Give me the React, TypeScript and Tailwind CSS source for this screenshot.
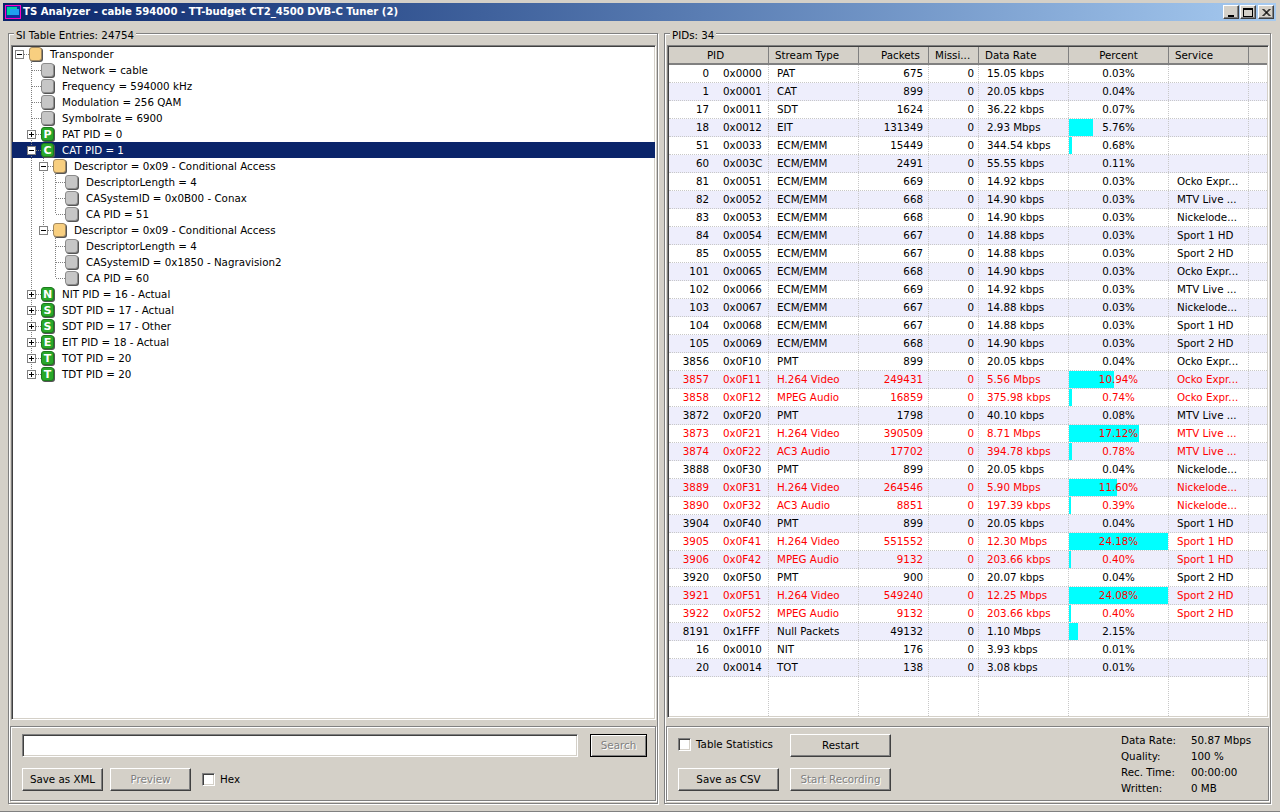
// TS Analyzer main window
import type { ReactNode } from "react";

type Kind = "" | "v" | "t" | "l" | "p" | "m" | "P" | "M" | "R";

type TreeRow = {
  text: string;
  guides: Kind[];
  icon: "yellow" | "gray" | "green";
  letter?: string;
  selected?: boolean;
};

const TREE: TreeRow[] = [
  { text: "Transponder", guides: ["R"], icon: "yellow" },
  { text: "Network = cable", guides: ["", "t"], icon: "gray" },
  { text: "Frequency = 594000 kHz", guides: ["", "t"], icon: "gray" },
  { text: "Modulation = 256 QAM", guides: ["", "t"], icon: "gray" },
  { text: "Symbolrate = 6900", guides: ["", "t"], icon: "gray" },
  { text: "PAT PID = 0", guides: ["", "p"], icon: "green", letter: "P" },
  { text: "CAT PID = 1", guides: ["", "m"], icon: "green", letter: "C", selected: true },
  { text: "Descriptor = 0x09 - Conditional Access", guides: ["", "v", "m"], icon: "yellow" },
  { text: "DescriptorLength = 4", guides: ["", "v", "v", "t"], icon: "gray" },
  { text: "CASystemID = 0x0B00 - Conax", guides: ["", "v", "v", "t"], icon: "gray" },
  { text: "CA PID = 51", guides: ["", "v", "v", "l"], icon: "gray" },
  { text: "Descriptor = 0x09 - Conditional Access", guides: ["", "v", "M"], icon: "yellow" },
  { text: "DescriptorLength = 4", guides: ["", "v", "", "t"], icon: "gray" },
  { text: "CASystemID = 0x1850 - Nagravision2", guides: ["", "v", "", "t"], icon: "gray" },
  { text: "CA PID = 60", guides: ["", "v", "", "l"], icon: "gray" },
  { text: "NIT PID = 16 - Actual", guides: ["", "p"], icon: "green", letter: "N" },
  { text: "SDT PID = 17 - Actual", guides: ["", "p"], icon: "green", letter: "S" },
  { text: "SDT PID = 17 - Other", guides: ["", "p"], icon: "green", letter: "S" },
  { text: "EIT PID = 18 - Actual", guides: ["", "p"], icon: "green", letter: "E" },
  { text: "TOT PID = 20", guides: ["", "p"], icon: "green", letter: "T" },
  { text: "TDT PID = 20", guides: ["", "P"], icon: "green", letter: "T" },
];

// pid, hex, type, packets, rate, percent, service, red
type Pid = [number, string, string, number, string, number, string, boolean?];

const PIDS: Pid[] = [
  [0, "0x0000", "PAT", 675, "15.05 kbps", 0.03, ""],
  [1, "0x0001", "CAT", 899, "20.05 kbps", 0.04, ""],
  [17, "0x0011", "SDT", 1624, "36.22 kbps", 0.07, ""],
  [18, "0x0012", "EIT", 131349, "2.93 Mbps", 5.76, ""],
  [51, "0x0033", "ECM/EMM", 15449, "344.54 kbps", 0.68, ""],
  [60, "0x003C", "ECM/EMM", 2491, "55.55 kbps", 0.11, ""],
  [81, "0x0051", "ECM/EMM", 669, "14.92 kbps", 0.03, "Ocko Expr..."],
  [82, "0x0052", "ECM/EMM", 668, "14.90 kbps", 0.03, "MTV Live ..."],
  [83, "0x0053", "ECM/EMM", 668, "14.90 kbps", 0.03, "Nickelode..."],
  [84, "0x0054", "ECM/EMM", 667, "14.88 kbps", 0.03, "Sport 1 HD"],
  [85, "0x0055", "ECM/EMM", 667, "14.88 kbps", 0.03, "Sport 2 HD"],
  [101, "0x0065", "ECM/EMM", 668, "14.90 kbps", 0.03, "Ocko Expr..."],
  [102, "0x0066", "ECM/EMM", 669, "14.92 kbps", 0.03, "MTV Live ..."],
  [103, "0x0067", "ECM/EMM", 667, "14.88 kbps", 0.03, "Nickelode..."],
  [104, "0x0068", "ECM/EMM", 667, "14.88 kbps", 0.03, "Sport 1 HD"],
  [105, "0x0069", "ECM/EMM", 668, "14.90 kbps", 0.03, "Sport 2 HD"],
  [3856, "0x0F10", "PMT", 899, "20.05 kbps", 0.04, "Ocko Expr..."],
  [3857, "0x0F11", "H.264 Video", 249431, "5.56 Mbps", 10.94, "Ocko Expr...", true],
  [3858, "0x0F12", "MPEG Audio", 16859, "375.98 kbps", 0.74, "Ocko Expr...", true],
  [3872, "0x0F20", "PMT", 1798, "40.10 kbps", 0.08, "MTV Live ..."],
  [3873, "0x0F21", "H.264 Video", 390509, "8.71 Mbps", 17.12, "MTV Live ...", true],
  [3874, "0x0F22", "AC3 Audio", 17702, "394.78 kbps", 0.78, "MTV Live ...", true],
  [3888, "0x0F30", "PMT", 899, "20.05 kbps", 0.04, "Nickelode..."],
  [3889, "0x0F31", "H.264 Video", 264546, "5.90 Mbps", 11.6, "Nickelode...", true],
  [3890, "0x0F32", "AC3 Audio", 8851, "197.39 kbps", 0.39, "Nickelode...", true],
  [3904, "0x0F40", "PMT", 899, "20.05 kbps", 0.04, "Sport 1 HD"],
  [3905, "0x0F41", "H.264 Video", 551552, "12.30 Mbps", 24.18, "Sport 1 HD", true],
  [3906, "0x0F42", "MPEG Audio", 9132, "203.66 kbps", 0.4, "Sport 1 HD", true],
  [3920, "0x0F50", "PMT", 900, "20.07 kbps", 0.04, "Sport 2 HD"],
  [3921, "0x0F51", "H.264 Video", 549240, "12.25 Mbps", 24.08, "Sport 2 HD", true],
  [3922, "0x0F52", "MPEG Audio", 9132, "203.66 kbps", 0.4, "Sport 2 HD", true],
  [8191, "0x1FFF", "Null Packets", 49132, "1.10 Mbps", 2.15, ""],
  [16, "0x0010", "NIT", 176, "3.93 kbps", 0.01, ""],
  [20, "0x0014", "TOT", 138, "3.08 kbps", 0.01, ""],
];

const raised =
  "border border-t-white border-l-white border-r-[#404040] border-b-[#404040] shadow-[inset_-1px_-1px_0_#808080]";
const sunken =
  "border border-t-[#808080] border-l-[#808080] border-r-white border-b-white shadow-[inset_1px_1px_0_#404040,inset_-1px_-1px_0_#d4d0c8]";
const etched = "border border-[#808080] shadow-[inset_1px_1px_0_#fff,1px_1px_0_#fff]";
const disabledText = "text-[#808080] [text-shadow:1px_1px_0_#fff]";

function Guide({ kind }: { kind: Kind }) {
  const dots = { stroke: "#808080", strokeDasharray: "1 1", shapeRendering: "crispEdges" as const };
  const box = kind === "p" || kind === "m" || kind === "P" || kind === "M" || kind === "R";
  const plus = kind === "p" || kind === "P";
  const full = kind === "v" || kind === "t" || kind === "p" || kind === "m";
  const upper = kind === "l" || kind === "P" || kind === "M";
  return (
    <svg width="12" height="16" className="block shrink-0 overflow-visible">
      {full && <line x1="6.5" y1="0" x2="6.5" y2="16" {...dots} />}
      {upper && <line x1="6.5" y1="0" x2="6.5" y2="8" {...dots} />}
      {kind !== "" && kind !== "v" && <line x1="7" y1="8.5" x2="16" y2="8.5" {...dots} />}
      {box && (
        <g shapeRendering="crispEdges">
          <rect x="2.5" y="4.5" width="8" height="8" fill="#fff" stroke="#808080" />
          <line x1="4" y1="8.5" x2="9" y2="8.5" stroke="#000" />
          {plus && <line x1="6.5" y1="6" x2="6.5" y2="11" stroke="#000" />}
        </g>
      )}
    </svg>
  );
}

function NodeIcon({ icon, letter }: { icon: TreeRow["icon"]; letter?: string }) {
  const fill =
    icon === "yellow"
      ? "bg-[#f8cf80] border-[#a08860]"
      : icon === "gray"
        ? "bg-[#c6c6c6] border-[#8c8c8c]"
        : "bg-[#2aa82a] border-[#1c7c1c]";
  return (
    <span className="flex w-[22px] shrink-0 pl-[4px]">
      <span
        className={`flex h-[14px] w-[13px] items-center justify-center rounded-[3px] border text-[11px] leading-none font-bold text-white shadow-[1px_1px_0_#555] ${fill}`}
      >
        {letter}
      </span>
    </span>
  );
}

function Button({ label, width, disabled, isDefault }: { label: string; width: string; disabled?: boolean; isDefault?: boolean }) {
  return (
    <button
      className={`h-[23px] ${width} bg-[#d4d0c8] ${
        isDefault
          ? "border border-black shadow-[inset_1px_1px_0_#fff,inset_-1px_-1px_0_#808080]"
          : raised
      } ${disabled ? disabledText : "text-black"}`}
    >
      {label}
    </button>
  );
}

function Checkbox({ label }: { label: string }) {
  return (
    <label className="flex items-center gap-[5px]">
      <span className={`h-[13px] w-[13px] bg-white ${sunken}`} />
      {label}
    </label>
  );
}

function WindowButton({ children }: { children: ReactNode }) {
  return (
    <span className={`flex h-[14px] w-[16px] items-center justify-center bg-[#d4d0c8] ${raised}`}>
      <svg width="10" height="9" shapeRendering="crispEdges" stroke="#000" fill="none">
        {children}
      </svg>
    </span>
  );
}

const COLS = ["w-[100px]", "w-[90px]", "w-[70px]", "w-[50px]", "w-[90px]", "w-[100px]", "w-[80px]"];
const HEADERS: [string, string][] = [
  ["PID", "justify-center pr-[6px]"],
  ["Stream Type", "pl-[6px]"],
  ["Packets", "justify-end pr-[8px]"],
  ["Missi...", "pl-[6px]"],
  ["Data Rate", "pl-[6px]"],
  ["Percent", "justify-center"],
  ["Service", "pl-[6px]"],
];
const cell = "h-full shrink-0 border-r border-dotted border-r-[#c8c8c8]";

function PidRow({ row, index }: { row: Pid; index: number }) {
  const [pid, hex, type, packets, rate, percent, service, red] = row;
  return (
    <div
      className={`flex h-[18px] shrink-0 items-center border-b border-dotted border-b-[#c8c8c8] ${
        index % 2 ? "bg-[#eeeefc]" : "bg-white"
      } ${red ? "text-[#ff0000]" : "text-black"}`}
    >
      <div className={`${cell} ${COLS[0]} flex items-center`}>
        <span className="w-[40px] text-right">{pid}</span>
        <span className="ml-[14px]">{hex}</span>
      </div>
      <div className={`${cell} ${COLS[1]} flex items-center pl-[8px]`}>{type}</div>
      <div className={`${cell} ${COLS[2]} flex items-center justify-end pr-[5px]`}>{packets}</div>
      <div className={`${cell} ${COLS[3]} flex items-center justify-end pr-[4px]`}>0</div>
      <div className={`${cell} ${COLS[4]} flex items-center pl-[8px]`}>{rate}</div>
      <div className={`${cell} ${COLS[5]} relative flex items-center justify-center`}>
        <span
          className="absolute top-0 bottom-0 left-0 bg-[#00ffff]"
          style={{ width: Math.round(percent * 4.1) }}
        />
        <span className="relative">{percent.toFixed(2)}%</span>
      </div>
      <div className={`${cell} ${COLS[6]} flex items-center pl-[8px]`}>{service}</div>
    </div>
  );
}

export default function App() {
  return (
    <div className="flex h-[812px] w-[1280px] flex-col overflow-hidden border-b border-b-[#808080] bg-[#d4d0c8] font-['DejaVu_Sans',sans-serif] text-[10.3px] leading-none text-black">
      <div className="mt-[3px] mr-[4px] ml-[3px] flex h-[18px] shrink-0 items-center bg-gradient-to-r from-[#0a246a] to-[#a6caf0] pr-[2px] pl-[2px]">
        <svg width="16" height="14" className="shrink-0" shapeRendering="crispEdges">
          <rect x="0.5" y="0.5" width="15" height="13" fill="#1030a0" stroke="#ff00c8" strokeWidth="1" />
          <rect x="2" y="2" width="10" height="8" fill="#00d0a0" />
          <rect x="5" y="4" width="9" height="6" fill="#20a0f0" />
        </svg>
        <span className="ml-[2px] text-[10.1px] font-bold text-white">
          TS Analyzer - cable 594000 - TT-budget CT2_4500 DVB-C Tuner (2)
        </span>
        <div className="ml-auto flex">
          <WindowButton>
            <line x1="2" y1="7.5" x2="8" y2="7.5" strokeWidth="2" />
          </WindowButton>
          <span className="w-px" />
          <WindowButton>
            <rect x="0.5" y="0.5" width="9" height="8" />
            <line x1="0" y1="1.5" x2="10" y2="1.5" />
          </WindowButton>
          <span className="w-[2px]" />
          <WindowButton>
            <path d="M1.5 1 L8.5 8 M2.5 1 L9.5 8 M8.5 1 L1.5 8 M9.5 1 L2.5 8" shapeRendering="auto" />
          </WindowButton>
        </div>
      </div>

      <div className="mt-[12px] flex h-[771px] shrink-0 gap-[6px] pl-[8px]">
        {/* left: SI table tree */}
        <section className={`relative flex w-[650px] flex-col pt-[11px] pr-[1px] pb-[2px] pl-[1px] ${etched}`}>
          <span className="absolute top-[-4px] left-[5px] bg-[#d4d0c8] px-[2px]">SI Table Entries: 24754</span>
          <div className={`ml-px h-[675px] overflow-hidden bg-white ${sunken}`}>
            {TREE.map((r, i) => (
              <div key={i} className={`flex h-4 items-center pl-px ${r.selected ? "bg-[#0a246a]" : ""}`}>
                {r.guides.map((g, j) => (
                  <Guide key={j} kind={g} />
                ))}
                <NodeIcon icon={r.icon} letter={r.letter} />
                <span className={`ml-[3px] ${r.selected ? "text-white" : ""}`}>{r.text}</span>
              </div>
            ))}
          </div>
          <div className={`mt-[6px] flex flex-1 flex-col gap-[11px] pt-[7px] pl-[11px] ${etched}`}>
            <div className="flex items-center gap-[12px]">
              <input className={`h-[23px] w-[556px] bg-white ${sunken}`} />
              <Button label="Search" width="w-[57px]" disabled isDefault />
            </div>
            <div className="flex items-center gap-[7px]">
              <Button label="Save as XML" width="w-[81px]" />
              <Button label="Preview" width="w-[81px]" disabled />
              <span className="ml-[4px]">
                <Checkbox label="Hex" />
              </span>
            </div>
          </div>
        </section>

        {/* right: PID list */}
        <section className={`relative flex w-[607px] flex-col pt-[11px] pr-[1px] pb-[2px] pl-[1px] ${etched}`}>
          <span className="absolute top-[-4px] left-[5px] bg-[#d4d0c8] px-[2px]">PIDs: 34</span>
          <div className={`ml-px flex h-[673px] flex-col overflow-hidden bg-white p-px ${sunken}`}>
            <div className="flex h-[18px] shrink-0 border-b-2 border-b-[#808080] bg-[#d4d0c8]">
              {HEADERS.map(([h, align], i) => (
                <div key={h} className={`flex shrink-0 items-center border-r border-r-[#808080] ${COLS[i]} ${align}`}>
                  {h}
                </div>
              ))}
            </div>
            {PIDS.map((p, i) => (
              <PidRow key={p[0]} row={p} index={i} />
            ))}
            <div className="flex flex-1">
              {COLS.map((c, i) => (
                <div key={i} className={`${cell} ${c}`} />
              ))}
            </div>
          </div>
          <div className={`mt-[8px] flex flex-1 justify-between pt-[7px] pr-[17px] pl-[11px] ${etched}`}>
            <div className="grid grid-cols-[101px_101px] grid-rows-[23px_23px] items-center gap-x-[11px] gap-y-[11px]">
              <div className="-mt-[2px]">
                <Checkbox label="Table Statistics" />
              </div>
              <Button label="Restart" width="w-[101px]" />
              <Button label="Save as CSV" width="w-[101px]" />
              <Button label="Start Recording" width="w-[101px]" disabled />
            </div>
            <div className="-mt-[2px] grid grid-cols-[70px_60px] auto-rows-[16px] items-center whitespace-nowrap">
              <span>Data Rate:</span>
              <span>50.87 Mbps</span>
              <span>Quality:</span>
              <span>100 %</span>
              <span>Rec. Time:</span>
              <span>00:00:00</span>
              <span>Written:</span>
              <span>0 MB</span>
            </div>
          </div>
        </section>
      </div>
    </div>
  );
}
